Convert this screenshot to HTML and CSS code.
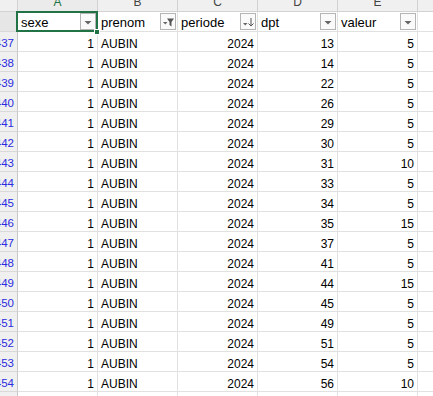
FILE: index.html
```html
<!DOCTYPE html>
<html lang="fr">

<head>
    <meta charset="UTF-8">
    <title>Feuil1</title>
    <link rel="stylesheet" href="styles.css">
</head>

<body>

    <div class="sheet">
        <!-- column letters -->
        <div class="row heads">
            <div class="corner"></div>
            <div class="letter active"><span>A</span></div>
            <div class="letter"><span>B</span></div>
            <div class="letter"><span>C</span></div>
            <div class="letter"><span>D</span></div>
            <div class="letter"><span>E</span></div>
            <div class="letter"><span>F</span></div>
        </div>

        <!-- filter row -->
        <div class="row titles">
            <div class="num sel"></div>
            <div class="cell title current">
                <span>sexe</span>
                <button class="filter"><svg width="14" height="14" viewBox="0 0 14 14"><path d="M3.5 6h7L7 9.5z" fill="#666"/></svg></button>
                <i class="handle"></i>
            </div>
            <div class="cell title">
                <span>prenom</span>
                <button class="filter"><svg width="14" height="14" viewBox="0 0 14 14"><path d="M2 7h4.5L4.25 9.5z" fill="#666"/><path d="M6 3.5h7L10.5 7v4.5L8.5 10V7z" fill="#555"/></svg></button>
            </div>
            <div class="cell title">
                <span>periode</span>
                <button class="filter"><svg width="14" height="14" viewBox="0 0 14 14"><path d="M2 8h4.5L4.25 10.5z" fill="#666"/><path d="M10 3v7.5" stroke="#555" stroke-width="1"/><path d="M7.5 8.5L10 11l2.5-2.5" stroke="#555" stroke-width="1" fill="none"/></svg></button>
            </div>
            <div class="cell title">
                <span>dpt</span>
                <button class="filter"><svg width="14" height="14" viewBox="0 0 14 14"><path d="M3.5 6h7L7 9.5z" fill="#666"/></svg></button>
            </div>
            <div class="cell title">
                <span>valeur</span>
                <button class="filter"><svg width="14" height="14" viewBox="0 0 14 14"><path d="M3.5 6h7L7 9.5z" fill="#666"/></svg></button>
            </div>
            <div class="cell"></div>
        </div>

        <div class="row"><div class="num">437</div><div class="cell n">1</div><div class="cell">AUBIN</div><div class="cell n">2024</div><div class="cell n">13</div><div class="cell n">5</div><div class="cell"></div></div>
        <div class="row"><div class="num">438</div><div class="cell n">1</div><div class="cell">AUBIN</div><div class="cell n">2024</div><div class="cell n">14</div><div class="cell n">5</div><div class="cell"></div></div>
        <div class="row"><div class="num">439</div><div class="cell n">1</div><div class="cell">AUBIN</div><div class="cell n">2024</div><div class="cell n">22</div><div class="cell n">5</div><div class="cell"></div></div>
        <div class="row"><div class="num">440</div><div class="cell n">1</div><div class="cell">AUBIN</div><div class="cell n">2024</div><div class="cell n">26</div><div class="cell n">5</div><div class="cell"></div></div>
        <div class="row"><div class="num">441</div><div class="cell n">1</div><div class="cell">AUBIN</div><div class="cell n">2024</div><div class="cell n">29</div><div class="cell n">5</div><div class="cell"></div></div>
        <div class="row"><div class="num">442</div><div class="cell n">1</div><div class="cell">AUBIN</div><div class="cell n">2024</div><div class="cell n">30</div><div class="cell n">5</div><div class="cell"></div></div>
        <div class="row"><div class="num">443</div><div class="cell n">1</div><div class="cell">AUBIN</div><div class="cell n">2024</div><div class="cell n">31</div><div class="cell n">10</div><div class="cell"></div></div>
        <div class="row"><div class="num">444</div><div class="cell n">1</div><div class="cell">AUBIN</div><div class="cell n">2024</div><div class="cell n">33</div><div class="cell n">5</div><div class="cell"></div></div>
        <div class="row"><div class="num">445</div><div class="cell n">1</div><div class="cell">AUBIN</div><div class="cell n">2024</div><div class="cell n">34</div><div class="cell n">5</div><div class="cell"></div></div>
        <div class="row"><div class="num">446</div><div class="cell n">1</div><div class="cell">AUBIN</div><div class="cell n">2024</div><div class="cell n">35</div><div class="cell n">15</div><div class="cell"></div></div>
        <div class="row"><div class="num">447</div><div class="cell n">1</div><div class="cell">AUBIN</div><div class="cell n">2024</div><div class="cell n">37</div><div class="cell n">5</div><div class="cell"></div></div>
        <div class="row"><div class="num">448</div><div class="cell n">1</div><div class="cell">AUBIN</div><div class="cell n">2024</div><div class="cell n">41</div><div class="cell n">5</div><div class="cell"></div></div>
        <div class="row"><div class="num">449</div><div class="cell n">1</div><div class="cell">AUBIN</div><div class="cell n">2024</div><div class="cell n">44</div><div class="cell n">15</div><div class="cell"></div></div>
        <div class="row"><div class="num">450</div><div class="cell n">1</div><div class="cell">AUBIN</div><div class="cell n">2024</div><div class="cell n">45</div><div class="cell n">5</div><div class="cell"></div></div>
        <div class="row"><div class="num">451</div><div class="cell n">1</div><div class="cell">AUBIN</div><div class="cell n">2024</div><div class="cell n">49</div><div class="cell n">5</div><div class="cell"></div></div>
        <div class="row"><div class="num">452</div><div class="cell n">1</div><div class="cell">AUBIN</div><div class="cell n">2024</div><div class="cell n">51</div><div class="cell n">5</div><div class="cell"></div></div>
        <div class="row"><div class="num">453</div><div class="cell n">1</div><div class="cell">AUBIN</div><div class="cell n">2024</div><div class="cell n">54</div><div class="cell n">5</div><div class="cell"></div></div>
        <div class="row"><div class="num">454</div><div class="cell n">1</div><div class="cell">AUBIN</div><div class="cell n">2024</div><div class="cell n">56</div><div class="cell n">10</div><div class="cell"></div></div>
        <div class="row"><div class="num"></div><div class="cell"></div><div class="cell"></div><div class="cell"></div><div class="cell"></div><div class="cell"></div><div class="cell"></div></div>
    </div>

</body>

</html>
```

FILE: styles.css
```css
* {
    box-sizing: border-box;
    margin: 0;
    padding: 0;
}

body {
    width: 433px;
    height: 396px;
    overflow: hidden;
    background: #fff;
    color: #000;
    font-family: "Liberation Sans", Arial, sans-serif;
}

.sheet {
    display: flex;
    flex-direction: column;
}

.row {
    display: grid;
    grid-template-columns: 18px repeat(5, 80px) 80px;
    height: 20px;
    flex-shrink: 0;
}

.row > div {
    display: flex;
    align-items: flex-end;
    overflow: hidden;
    border-right: 1px solid #e1e1e1;
    border-bottom: 1px solid #e1e1e1;
}

/* column letters */
.heads {
    height: 12px;
    background: #f0f0f0;
}

.heads > div {
    border-color: #d2d2d2;
}

.corner {
    background: #f0f0f0;
}

.letter {
    justify-content: center;
    padding-bottom: 3px;
    font-size: 12px;
    line-height: 12px;
    color: #444;
}

.letter.active {
    color: #217346;
    background: #ebebeb;
}

/* row numbers */
.row > .num {
    justify-content: flex-end;
    padding-right: 3px;
    padding-bottom: 1px;
    background: #f0f0f0;
    border-right-color: #c8c8c8;
    border-bottom-color: #d9d9d9;
    font-size: 11.5px;
    line-height: 13px;
    color: #2b2be0;
    white-space: nowrap;
}

.row > .num.sel {
    background: #e6e6e6;
}

/* cells */
.cell {
    padding: 0 3px;
    font-size: 12px;
    line-height: 14px;
    white-space: nowrap;
}

.cell.n {
    justify-content: flex-end;
}

.title {
    font-size: 13px;
    padding-bottom: 1px;
    padding-right: 1px;
}

.title span {
    flex: 1;
}

.filter {
    align-self: flex-start;
    display: flex;
    align-items: center;
    justify-content: center;
    width: 16px;
    height: 17px;
    margin-top: 1px;
    border: 1px solid #b4b4b4;
    background: #fafafa;
}

/* selected cell A1 */
.row > .current {
    position: relative;
    overflow: visible;
}

.current::after {
    content: "";
    position: absolute;
    left: -2px;
    top: -1px;
    right: -1px;
    bottom: -1px;
    border: 2px solid #217346;
    pointer-events: none;
}

.handle {
    position: absolute;
    right: -3px;
    bottom: -4px;
    width: 6px;
    height: 6px;
    background: #217346;
    border: 1px solid #fff;
    z-index: 1;
}
```
